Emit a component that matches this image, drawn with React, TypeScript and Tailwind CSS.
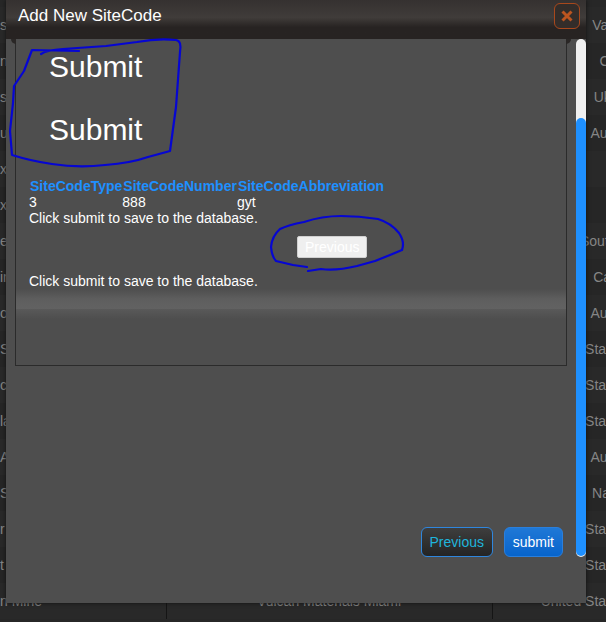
import React from "react";

interface Site {
  name: string;
  owner: string;
  country: string;
}

const sites: Site[] = [
  { name: "  s", owner: "", country: "Vanuatu" },
  { name: "n", owner: "", country: "China" },
  { name: "s", owner: "", country: "Ukraine" },
  { name: "u", owner: "", country: "Australia" },
  { name: "x", owner: "", country: "" },
  { name: "x", owner: "", country: "" },
  { name: "e", owner: "", country: "South Africa" },
  { name: "in", owner: "", country: "Canada" },
  { name: "or", owner: "", country: "Australia" },
  { name: "S", owner: "", country: "United States of America" },
  { name: "cl", owner: "", country: "United States of America" },
  { name: "la", owner: "", country: "United States of America" },
  { name: "A", owner: "", country: "Australia" },
  { name: "S", owner: "", country: "Namibia" },
  { name: "r", owner: "", country: "United States of America" },
  { name: "t", owner: "", country: "United States of America" },
  { name: "n Mine", owner: "Vulcan Materials Miami", country: "United States of America" },
];

const SiteTable: React.FC = () => {
  return (
    <table className="w-[743px] table-fixed border-collapse mt-[7px] text-sm text-[#858585]">
      <colgroup>
        <col className="w-[166px]" />
        <col className="w-[326px]" />
        <col />
      </colgroup>
      <tbody>
        {sites.map((site, index) => (
          <tr key={index} className="h-9 odd:bg-[#292929] even:bg-[#262626]">
            <td className="p-0 border-r border-[#151515]">{site.name}</td>
            <td className="p-0 border-r border-[#151515] text-center">
              {site.owner}
            </td>
            <td className="p-0 text-center">{site.country}</td>
          </tr>
        ))}
      </tbody>
    </table>
  );
};

const DialogHeader: React.FC = () => {
  return (
    <header className="h-[39px] pl-3 pr-1.5 flex items-start justify-between bg-linear-to-b from-[#353130] via-[#403c3a] via-45% to-[#272322] to-70%">
      <h1 className="text-[17px] leading-8 text-white">Add New SiteCode</h1>
      <button
        type="button"
        aria-label="Close"
        className="mt-[3px] size-[26px] rounded-md border border-[#a8481c] bg-[#332d2a] flex items-center justify-center"
      >
        <svg
          viewBox="0 0 12 12"
          className="size-3"
          stroke="#bd5520"
          strokeWidth="3"
        >
          <path d="M1.5 1.5L10.5 10.5M10.5 1.5L1.5 10.5" />
        </svg>
      </button>
    </header>
  );
};

const SubmitStep: React.FC = () => {
  return (
    <section className="relative ml-[9px] mr-[9px] pl-[13px] pt-2.5 border border-t-0 border-[#2b2b2b] text-white">
      {/* rounded tab corners on both sides of the step */}
      <span className="absolute right-full top-0 w-[5px] h-[5px] rounded-bl-md bg-[#2a2726]" />
      <span className="absolute left-full top-0 w-[5px] h-[5px] rounded-br-md bg-[#2a2726]" />
      <h2 className="pl-5 text-[30px] leading-9">Submit</h2>
      <h2 className="pl-5 mt-[27px] text-[30px] leading-9">Submit</h2>
      <table className="mt-[30px]">
        <thead>
          <tr className="text-[#1e90ff]">
            <th className="p-0 pl-px">SiteCodeType</th>
            <th className="p-0 pl-px">SiteCodeNumber</th>
            <th className="p-0 pl-px">SiteCodeAbbreviation</th>
          </tr>
        </thead>
        <tbody>
          <tr>
            <td className="p-0">3</td>
            <td className="p-0">888</td>
            <td className="p-0">gyt</td>
          </tr>
        </tbody>
      </table>
      <p>Click submit to save to the database.</p>
      <div className="mt-2.5 pl-[268px]">
        <button
          type="button"
          className="block h-[22px] px-[7px] leading-5 rounded-xs border border-[#d0d0d0] bg-[#efefef] text-white"
        >
          Previous
        </button>
      </div>
      <p className="mt-[15px]">Click submit to save to the database.</p>
      <div className="-ml-[13px] h-5 bg-linear-to-b from-[#4e4e4e] via-[#5e5e5e] to-[#626262]" />
      <div className="-ml-[13px] h-2.5 bg-linear-to-b from-[#595959] to-[#4e4e4e]" />
      <div className="h-[46px]" />
    </section>
  );
};

const DialogBody: React.FC = () => {
  return (
    <div className="flex mb-[46px]">
      <div className="flex-1 text-sm leading-4">
        <SubmitStep />
        <div className="mt-[161px] pr-[13px] flex justify-end gap-[11px]">
          <button
            type="button"
            className="h-[30px] w-[72px] rounded-md border border-[#2f86dd] bg-linear-to-b from-[#3e3e3e] to-[#242424] text-[#1fb5dc]"
          >
            Previous
          </button>
          <button
            type="button"
            className="h-[30px] px-2 rounded-md border border-[#2a7fdc] bg-linear-to-b from-[#1f78d6] to-[#0664cc] text-white"
          >
            submit
          </button>
        </div>
      </div>
      <div className="w-2.5 rounded-full bg-[#f0f0f0] flex flex-col">
        <div className="mt-[79px] mb-px flex-1 rounded-full bg-[#1e90ff]" />
      </div>
    </div>
  );
};

// freehand marks drawn over the dialog
const InkMarks: React.FC = () => {
  return (
    <svg
      viewBox="0 0 420 280"
      className="absolute left-0 top-0 w-[420px] h-[280px] pointer-events-none"
      fill="none"
      stroke="#0606d2"
      strokeWidth="2.2"
      strokeLinecap="round"
      strokeLinejoin="round"
    >
      <path d="M79 51L32 50L24 71L14 86L13 103L10 131L12 155Q31 161 52 164Q78 168 105 165Q131 163 148 157L170 151L176 107L180 52Q182 41 176 40Q158 38 137 42L106 46L63 49Q47 50 41 54" />
      <path d="M307 267L293 265L276 261Q272 257 271 247Q272 236 280 229Q288 225 304 222Q322 216 341 216Q359 216 378 219Q391 223 399 233Q405 242 402 250L390 255L375 261L357 266Q336 271 321 269L308 271" />
    </svg>
  );
};

const App: React.FC = () => {
  return (
    <main className="relative min-h-screen max-h-screen overflow-hidden bg-[#272727] font-['Liberation_Sans',Arial,sans-serif]">
      <SiteTable />
      <div
        role="dialog"
        aria-label="Add New SiteCode"
        className="absolute left-1.5 right-5 top-0 bg-[#4e4e4e] shadow-[0_0_4px_#111]"
      >
        <DialogHeader />
        <DialogBody />
      </div>
      <InkMarks />
    </main>
  );
};

export default App;
